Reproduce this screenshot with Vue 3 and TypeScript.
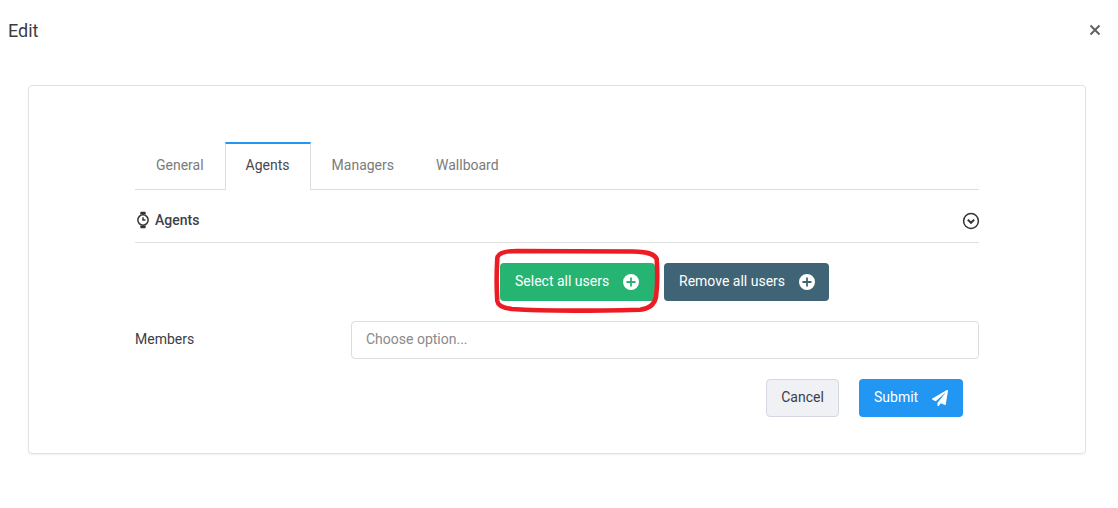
<script setup lang="ts">
const tabs = ['General', 'Agents', 'Managers', 'Wallboard']
const activeTab = 'Agents'
</script>

<template>
  <div class="modal">
    <header class="modal-header">
      <h3>Edit</h3>
      <svg class="close" viewBox="0 0 12 12" width="12" height="12" aria-label="Close">
        <path d="M1.5 1.5l9 9M10.5 1.5l-9 9" />
      </svg>
    </header>

    <div class="card">
      <ul class="tabs">
        <li v-for="tab in tabs" :key="tab" class="tab" :class="{ active: tab === activeTab }">{{ tab }}</li>
      </ul>

      <div class="section-head">
        <span class="section-title">
          <svg viewBox="0 0 16 20" width="14" height="18" class="watch">
            <path class="solid" d="M4.6 3.4 5.3 0.6h5.4l0.7 2.8zM4.6 16.6l0.7 2.8h5.4l0.7-2.8z" />
            <circle cx="8" cy="10" r="5.9" />
            <path d="M8 6.8V10h2.8" />
          </svg>
          Agents
        </span>
        <svg viewBox="0 0 18 18" width="18" height="18" class="chevron">
          <circle cx="9" cy="9" r="7.4" />
          <path d="M5.8 7.6 9 10.8l3.2-3.2" />
        </svg>
      </div>

      <div class="form-grid">
        <div class="bulk-actions">
          <div class="marked">
            <button class="btn green">
              Select all users
              <svg viewBox="0 0 16 16" width="16" height="16" class="plus">
                <path fill-rule="evenodd" d="M8 0a8 8 0 1 1 0 16A8 8 0 0 1 8 0zM7.1 3.5v3.6H3.5v1.8h3.6v3.6h1.8V8.9h3.6V7.1H8.9V3.5z" />
              </svg>
            </button>
            <!-- hand drawn annotation round the button -->
            <svg class="oval" viewBox="0 0 180 74" width="180" height="74">
              <path d="M26.7 7L143 7.5C155 7.7 164 9 166.7 15C167.5 28 167.5 42 166 53C164 62 158 65 150 65.7C100 67 50 67 21.7 65C13 64 8 62 7.3 57C6.5 45 6.5 28 7.3 14C8 9 15 7 26.7 7Z" />
            </svg>
          </div>
          <button class="btn slate">
            Remove all users
            <svg viewBox="0 0 16 16" width="16" height="16" class="plus">
              <path fill-rule="evenodd" d="M8 0a8 8 0 1 1 0 16A8 8 0 0 1 8 0zM7.1 3.5v3.6H3.5v1.8h3.6v3.6h1.8V8.9h3.6V7.1H8.9V3.5z" />
            </svg>
          </button>
        </div>

        <label class="field-label">Members</label>
        <input class="field-input" type="text" placeholder="Choose option..." />
      </div>

      <div class="form-footer">
        <button class="btn cancel">Cancel</button>
        <button class="btn blue">
          Submit
          <svg viewBox="0 0 512 512" width="16" height="16" class="plane">
            <path d="M476 3.2 12.5 270.6c-18.1 10.4-15.8 35.6 2.2 43.2L121 358.4l287.3-253.2c5.5-4.9 13.3 2.6 8.6 8.3L176 407v80.5c0 23.6 28.5 32.9 42.5 15.8L282 426l124.6 52.2c14.2 6 30.4-2.9 33-18.2l72-432C515 7.8 493.3-6.8 476 3.2z" />
          </svg>
        </button>
      </div>
    </div>
  </div>
</template>

<style>
html, body { background: #fff; }
</style>

<style scoped>
* { box-sizing: border-box; }

.modal {
  width: 1118px;
  height: 508px;
  overflow: hidden;
  background: #fff;
  font-family: Roboto, "Liberation Sans", sans-serif;
  font-size: 14px;
  color: #3b3d45;
}

.modal-header {
  height: 60px;
  padding: 0 17px 0 8px;
  display: flex;
  align-items: center;
  justify-content: space-between;
}
.modal-header h3 {
  margin: 0;
  font-size: 18px;
  font-weight: 400;
  color: #3d3d3d;
}
.close path { fill: none; stroke: #5f5f5f; stroke-width: 1.9; }

.card {
  height: 369px;
  margin: 25px 32px 0 28px;
  padding: 56px 106px 0;
  border: 1px solid #e2e2e2;
  border-radius: 4px;
  box-shadow: 0 1px 2px rgba(0, 0, 0, 0.06);
}

.tabs {
  display: flex;
  margin: 0;
  padding: 0;
  list-style: none;
  height: 48px;
  border-bottom: 1px solid #dcdcdc;
}
.tab {
  padding: 0 21px;
  height: 47px;
  line-height: 47px;
  color: #7b7b7b;
}
.tab.active {
  height: 48px;
  line-height: 43px;
  color: #46484f;
  background: #fff;
  border-top: 2px solid #2196f3;
  border-left: 1px solid #dcdcdc;
  border-right: 1px solid #dcdcdc;
  padding: 0 20px;
}

.section-head {
  height: 53px;
  display: flex;
  align-items: center;
  justify-content: space-between;
  border-bottom: 1px solid #e0e0e0;
  padding: 8px 0 0 1px;
}
.section-title {
  display: flex;
  align-items: center;
  gap: 5px;
  font-weight: 500;
  font-size: 14px;
  color: #3f414a;
}
.watch circle, .watch path { fill: none; stroke: #333; stroke-width: 1.7; }
.watch .solid { fill: #333; stroke: none; }
.chevron circle, .chevron path { fill: none; stroke: #333; stroke-width: 1.5; }
.chevron path { stroke-width: 2; }
.chevron { margin: 1px -1px 0 0; }

.form-grid {
  display: grid;
  grid-template-columns: 216px 1fr;
  row-gap: 20px;
  align-items: center;
  padding-top: 20px;
}
.bulk-actions {
  grid-column: 2;
  display: flex;
  justify-content: center;
  gap: 9px;
  margin-right: 1px;
}
.marked { position: relative; }
.oval {
  position: absolute;
  left: -10px;
  top: -19px;
  pointer-events: none;
}
.oval path { fill: none; stroke: #ed1c24; stroke-width: 4.6; }

.btn {
  height: 38px;
  padding: 0 14px 2px;
  border: 1px solid transparent;
  border-radius: 4px;
  font: 400 14px Roboto, "Liberation Sans", sans-serif;
  color: #fff;
  display: inline-flex;
  align-items: center;
  gap: 14px;
  white-space: nowrap;
}
.green { background: #26b473; width: 155px; }
.slate { background: #3f6475; width: 165px; }
.plus { fill: #fff; flex: none; margin-top: 2px; }
.plane { fill: #fff; flex: none; margin-top: 2px; }
.blue { background: #2196f3; width: 104px; }
.cancel {
  background: #f0f1f5;
  border-color: #d5d8e0;
  color: #3b3d45;
  width: 73px;
  justify-content: center;
  padding: 0 0 2px;
}

.field-label { padding-bottom: 2px; }
.field-input {
  height: 38px;
  width: 100%;
  padding: 0 14px 2px;
  border: 1px solid #dcdcdc;
  border-radius: 4px;
  font: 400 14px Roboto, "Liberation Sans", sans-serif;
  outline: none;
}
.field-input::placeholder { color: #8a8a8a; opacity: 1; }

.form-footer {
  display: flex;
  justify-content: flex-end;
  gap: 20px;
  padding: 20px 16px 0 0;
}
</style>
